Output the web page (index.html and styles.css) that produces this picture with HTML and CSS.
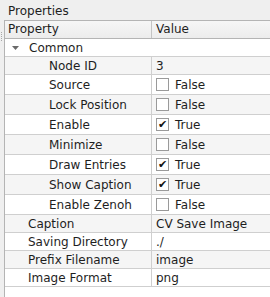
FILE: index.html
```html
<!DOCTYPE html>
<html>
<head>
    <title>Properties</title>
    <link rel="stylesheet" href="styles.css">
</head>
<body>
    <div class="panel">
        <div class="title">Properties</div>
        <div class="body">
            <div class="gutter"><div class="grip"></div></div>
            <div class="tree">
                <div class="header">
                    <div class="cell name">Property</div>
                    <div class="cell value">Value</div>
                </div>

                <div class="row group">
                    <div class="cell name">
                        <svg class="arrow" width="7" height="4" viewBox="0 0 7 4"><path d="M0 0h7L3.5 4z" fill="#6a6a6a"/></svg>
                        Common
                    </div>
                </div>
                <div class="row alt">
                    <div class="cell name child">Node ID</div>
                    <div class="cell value">3</div>
                </div>
                <div class="row tall">
                    <div class="cell name child">Source</div>
                    <div class="cell value"><span class="check"></span>False</div>
                </div>
                <div class="row tall alt">
                    <div class="cell name child">Lock Position</div>
                    <div class="cell value"><span class="check"></span>False</div>
                </div>
                <div class="row tall">
                    <div class="cell name child">Enable</div>
                    <div class="cell value"><span class="check on">✔</span>True</div>
                </div>
                <div class="row tall alt">
                    <div class="cell name child">Minimize</div>
                    <div class="cell value"><span class="check"></span>False</div>
                </div>
                <div class="row tall">
                    <div class="cell name child">Draw Entries</div>
                    <div class="cell value"><span class="check on">✔</span>True</div>
                </div>
                <div class="row tall alt">
                    <div class="cell name child">Show Caption</div>
                    <div class="cell value"><span class="check on">✔</span>True</div>
                </div>
                <div class="row tall">
                    <div class="cell name child">Enable Zenoh</div>
                    <div class="cell value"><span class="check"></span>False</div>
                </div>

                <div class="row alt">
                    <div class="cell name top">Caption</div>
                    <div class="cell value">CV Save Image</div>
                </div>
                <div class="row">
                    <div class="cell name top">Saving Directory</div>
                    <div class="cell value">./</div>
                </div>
                <div class="row alt">
                    <div class="cell name top">Prefix Filename</div>
                    <div class="cell value">image</div>
                </div>
                <div class="row">
                    <div class="cell name top">Image Format</div>
                    <div class="cell value">png</div>
                </div>
            </div>
        </div>
    </div>
</body>
</html>
```

FILE: styles.css
```css
body {
    margin: 0;
    font-family: "DejaVu Sans", sans-serif;
    font-size: 12px;
    color: #1e1e1e;
}
.panel {
    width: 270px;
    height: 297px;
    background: #efefef;
    display: flex;
    flex-direction: column;
    overflow: hidden;
}
.title {
    height: 18px;
    padding-top: 2px;
    line-height: 18px;
    padding-left: 8px;
}
.body {
    flex: 1;
    display: flex;
}
.gutter {
    width: 4px;
}
.grip {
    margin: 12px 0 0 1px;
    width: 1px;
    height: 9px;
    border-left: 1px dotted #a8a8a8;
}
.tree {
    flex: 1;
    background: #fff;
    border-left: 1px solid #b4b4b4;
    border-top: 1px solid #b4b4b4;
}
.header {
    display: flex;
    height: 17px;
    border-bottom: 1px solid #b4b4b4;
    background: linear-gradient(#f6f6f6, #ececec);
}
.header .cell {
    line-height: 17px;
}
.header .name {
    padding-left: 3px;
}
.row {
    display: flex;
    height: 17px;
    border-bottom: 1px solid #cfcfcf;
}
.row.tall {
    height: 19px;
}
.row.alt {
    background: #f5f5f5;
}
.cell {
    display: flex;
    align-items: center;
    white-space: nowrap;
}
.name {
    width: 146px;
    border-right: 1px solid #cfcfcf;
}
.header .name {
    width: 143px;
    border-right-color: #c4c4c4;
}
.value {
    flex: 1;
    padding-left: 4px;
}
.group .name {
    border-right: none;
    padding-left: 7px;
    width: auto;
}
.arrow {
    margin-right: 10px;
    margin-top: 1px;
}
.child {
    padding-left: 44px;
    width: 102px;
}
.top {
    padding-left: 23px;
    width: 123px;
}
.check {
    width: 11px;
    height: 11px;
    border: 1px solid #9a9a9a;
    background: #fff;
    margin-right: 6px;
    display: flex;
    align-items: center;
    justify-content: center;
    font-size: 11px;
    line-height: 11px;
    color: #111;
}
```
